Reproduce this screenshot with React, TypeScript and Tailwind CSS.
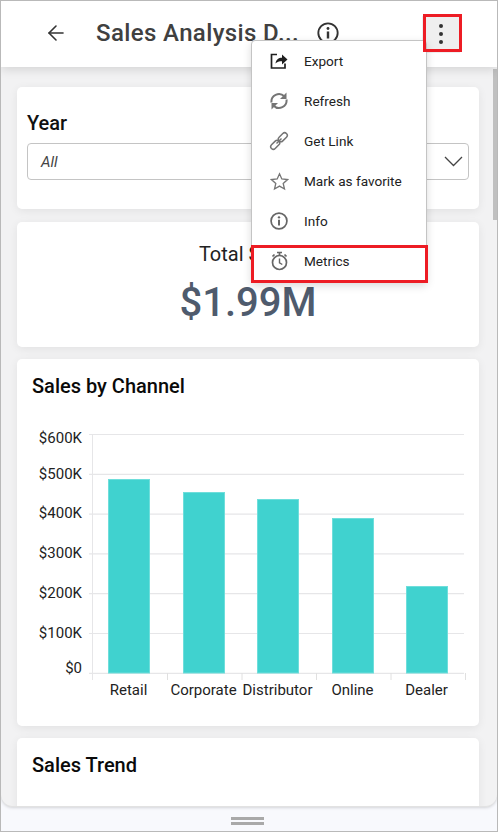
import React from 'react';
import { ArrowLeft } from 'lucide-react';

const MENU_ITEMS = [
  { label: 'Export', icon: 'export' },
  { label: 'Refresh', icon: 'refresh' },
  { label: 'Get Link', icon: 'link' },
  { label: 'Mark as favorite', icon: 'star' },
  { label: 'Info', icon: 'info' },
  { label: 'Metrics', icon: 'timer' },
];

const TICKS = [
  { label: '$600K', y: 443 },
  { label: '$500K', y: 479 },
  { label: '$400K', y: 518 },
  { label: '$300K', y: 558 },
  { label: '$200K', y: 598 },
  { label: '$100K', y: 638 },
  { label: '$0', y: 673 },
];

const BARS = [
  { label: 'Retail', x: 108, top: 479 },
  { label: 'Corporate', x: 183, top: 492 },
  { label: 'Distributor', x: 257, top: 499 },
  { label: 'Online', x: 332, top: 518 },
  { label: 'Dealer', x: 406, top: 586 },
];

function InfoIcon({ size, color, width }: { size: number; color: string; width: number }) {
  return (
    <svg width={size} height={size} viewBox="0 0 20 20" fill="none">
      <circle cx="10" cy="10" r="8.800" stroke={color} strokeWidth={width} />
      <circle cx="10" cy="5.900" r="1.300" fill={color} />
      <rect x="8.900" y="8.600" width="2.200" height="6.400" fill={color} />
    </svg>
  );
}

function MenuIcon({ name }: { name: string }) {
  if (name === 'export') {
    return (
      <svg width="18" height="18" viewBox="0 0 18 18" fill="none">
        <path d="M7 2.500H1.500v13.500h13.500v-4.500" stroke="#1f1f1f" strokeWidth="1.700" />
        <path d="M5.500 11.500c.5-4 3-5.800 6.500-5.800V2.500l5.500 5-5.500 5V9.200c-2.800 0-5 .6-6.500 2.300z" fill="#1f1f1f" />
      </svg>
    );
  }
  if (name === 'refresh') {
    return (
      <svg width="18" height="18" viewBox="0 0 18 18" fill="none" stroke="#757575" strokeWidth="2">
        <path d="M1.500 10.500a7.500 7.500 0 0 1 12.800-6.200" />
        <path d="M16.500 7.500a7.500 7.500 0 0 1-12.800 6.200" />
        <path d="M16.500 .5v6.500h-6.500z" fill="#757575" stroke="none" />
        <path d="M1.500 17.500v-6.500h6.500z" fill="#757575" stroke="none" />
      </svg>
    );
  }
  if (name === 'link') {
    return (
      <svg width="20" height="20" viewBox="0 0 20 20" fill="none" stroke="#757575" strokeWidth="1.500">
        <rect x="-5.200" y="-2.600" width="10.400" height="5.200" rx="2.600" transform="translate(6.200 13.800) rotate(-45)" />
        <rect x="-5.200" y="-2.600" width="10.400" height="5.200" rx="2.600" transform="translate(13.800 6.200) rotate(-45)" />
        <path d="M7.500 12.500l5-5" />
      </svg>
    );
  }
  if (name === 'star') {
    return (
      <svg width="19" height="19" viewBox="0 0 19 19" fill="none">
        <path d="M9.500 1.800l2.300 5.200 5.700.6-4.300 3.800 1.300 5.600-5-2.900-5 2.900 1.300-5.600L1.500 7.600l5.700-.6z" stroke="#757575" strokeWidth="1.300" strokeLinejoin="miter" />
      </svg>
    );
  }
  if (name === 'info') return <InfoIcon size={18} color="#666666" width={1.900} />;
  return (
    <svg width="19" height="20" viewBox="0 0 19 20" fill="none" stroke="#666666">
      <circle cx="9.500" cy="11.500" r="7" strokeWidth="1.700" />
      <path d="M7 1.500h5M9.500 1.500v3" strokeWidth="1.700" />
      <path d="M2.500 5.500l2-2M16.500 5.500l-2-2" strokeWidth="1.700" />
      <path d="M9.500 7.500v4.300l2.800 1.700" strokeWidth="1.400" />
    </svg>
  );
}

function SalesChart() {
  return (
    <svg width="462" height="300" viewBox="17 420 462 300" className="block font-['Roboto',sans-serif]">
      {TICKS.map((t, i) => {
        const y = 434.500 + i * 39.800;
        return (
          <g key={t.label}>
            <line x1="89" x2="464" y1={y} y2={y} stroke="#e6e6e8" strokeWidth="1.200" />
            <text x="82" y={t.y} textAnchor="end" fontSize="15" fill="#222">
              {t.label}
            </text>
          </g>
        );
      })}
      <line x1="92.500" x2="92.500" y1="434" y2="680" stroke="#e6e6e8" />
      {BARS.map((b, i) => (
        <g key={b.label}>
          <rect x={b.x + 0.5} y={b.top + 0.5} width="41" height={673 - b.top - 0.5} fill="#40d2cf" stroke="#6fdedb" />
          <line x1={167.500 + i * 74.500} x2={167.500 + i * 74.500} y1="673" y2="680" stroke="#e0e0e0" />
          <text x={b.x + 20.500} y="695" textAnchor="middle" fontSize="15" fill="#222">
            {b.label}
          </text>
        </g>
      ))}
    </svg>
  );
}

export default function App() {
  return (
    <div className="relative w-[498px] h-[832px] overflow-hidden bg-[#f8f9fd] border border-[#b9b9b9] font-['Roboto',sans-serif]">
      <div className="h-[806px] overflow-hidden rounded-b-xl bg-[#f2f2f3] border-b border-[#e2e2e2] shadow-[0_1px_3px_rgba(0,0,0,0.15)]">
        {/* Header */}
        <header className="relative z-10 h-[66px] pb-[2px] bg-white flex items-center shadow-[0_2px_10px_rgba(0,0,0,0.14)]">
          <ArrowLeft className="w-[24px] h-[24px] ml-[43px] text-[#333]" strokeWidth={1.6} />
          <h1 className="ml-[28px] text-[24px] font-medium text-[#404040] leading-none tracking-[0.38px]">Sales Analysis D...</h1>
          <span className="ml-[18px]">
            <InfoIcon size={22} color="#333333" width={1.700} />
          </span>
          <div className="ml-auto mr-[37px] mt-[2px] w-[38px] h-[37px] bg-[#efefef] flex flex-col items-center justify-center gap-[4px]">
            <span className="w-[4px] h-[4px] rounded-full bg-[#333]" />
            <span className="w-[4px] h-[4px] rounded-full bg-[#333]" />
            <span className="w-[4px] h-[4px] rounded-full bg-[#333]" />
          </div>
        </header>

        <div className="flex">
          <main className="w-[462px] ml-[16px] pt-[20px] flex flex-col gap-[12px]">
            {/* Year filter */}
            <section className="h-[122px] bg-white rounded-[5px] shadow-[0_2px_10px_rgba(0,0,0,0.07)] px-[10px] pt-[25px]">
              <div className="text-[20px] font-medium text-[#111] leading-[22px]">Year</div>
              <div className="mt-[9px] h-[37px] border border-[#c4c4c4] rounded flex items-center justify-between pl-[13px] pr-[5px]">
                <span className="italic text-[15px] text-[#444] pt-[1px]">All</span>
                <svg width="19" height="11" viewBox="0 0 19 11" fill="none">
                  <path d="M1 1l8.500 8.500L18 1" stroke="#444" strokeWidth="1.300" />
                </svg>
              </div>
            </section>

            {/* Total sales */}
            <section className="h-[125px] mt-[1px] bg-white rounded-[5px] shadow-[0_2px_10px_rgba(0,0,0,0.07)] flex flex-col items-center pt-[19px]">
              <div className="text-[20px] text-[#222] leading-[26px]">Total Sales</div>
              <div className="mt-[13px] text-[40px] font-medium text-[#4f5b6d] leading-[46px]">$1.99M</div>
            </section>

            {/* Sales by channel */}
            <section className="h-[367px] bg-white rounded-[5px] shadow-[0_2px_10px_rgba(0,0,0,0.07)]">
              <h2 className="pl-[15px] pt-[15px] text-[20px] font-medium text-[#0a0a0a] leading-[24px] h-[61px]">Sales by Channel</h2>
              <SalesChart />
            </section>

            {/* Sales trend */}
            <section className="h-[100px] bg-white rounded-[5px] shadow-[0_2px_10px_rgba(0,0,0,0.07)]">
              <h2 className="pl-[15px] pt-[15px] text-[20px] font-medium text-[#0a0a0a] leading-[24px]">Sales Trend</h2>
            </section>
          </main>
          <div className="ml-[14px] mt-[2px] w-[4px] h-[151px] bg-[#c0c0c0]" />
        </div>
      </div>

      {/* Resize handle */}
      <div className="flex flex-col items-center gap-[2px] pt-[10px] pr-[3px]">
        <span className="w-[33px] h-[3px] bg-[#a9a9a9]" />
        <span className="w-[33px] h-[3px] bg-[#a9a9a9]" />
      </div>

      {/* Overflow menu */}
      <div className="absolute left-[250px] top-[39px] z-20 w-[176px] h-[243px] bg-white border border-[#c4c4c4] rounded shadow-[0_3px_8px_rgba(0,0,0,0.15)]">
        {MENU_ITEMS.map((item) => (
          <div key={item.label} className="h-[40px] flex items-center text-[13.6px] text-[#222]">
            <span className="w-[20px] ml-[17px] flex items-center justify-center">
              <MenuIcon name={item.icon} />
            </span>
            <span className="ml-[15px]">{item.label}</span>
          </div>
        ))}
      </div>

      {/* Annotation boxes */}
      <div className="absolute left-[422px] top-[13px] z-30 w-[39px] h-[38px] border-[3px] border-[#ed1c24]" />
      <div className="absolute left-[250px] top-[244px] z-30 w-[177px] h-[38px] border-[3px] border-[#ed1c24]" />
    </div>
  );
}
